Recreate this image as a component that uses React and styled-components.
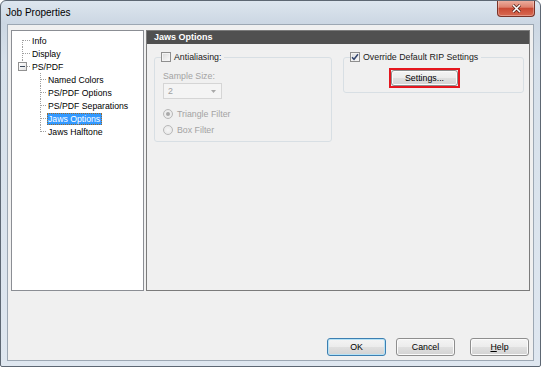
import React from "react";
import styled, { createGlobalStyle } from "styled-components";

const GlobalStyle = createGlobalStyle`
  html, body { margin: 0; padding: 0; background: #ffffff; }
  body { font-family: "Liberation Sans", Arial, sans-serif; }
  * { box-sizing: border-box; }
`;

const Window = styled.div`
  width: 541px;
  height: 367px;
  border: 1px solid #5d6773;
  border-radius: 6px 6px 2px 2px;
  background: linear-gradient(to bottom, #dde6ef 0px, #ccd7e3 22px, #d6e0ea 60px, #dfe7f0 100%);
  display: flex;
  flex-direction: column;
  overflow: hidden;
  font-family: "Liberation Sans", Arial, sans-serif;
`;

const TitleBar = styled.div`
  height: 23px;
  flex: none;
  display: flex;
  justify-content: space-between;
  align-items: flex-start;
  padding-left: 5px;
`;

const Title = styled.div`
  font-size: 10px;
  line-height: 23px;
  color: #000;
`;

const CloseButton = styled.div`
  width: 38px;
  height: 17px;
  margin-right: 5px;
  margin-top: -1px;
  border: 1px solid #7a3328;
  border-top: none;
  border-radius: 0 0 4px 4px;
  background: linear-gradient(to bottom, #eeb3a4 0%, #de816d 45%, #c94a34 52%, #d86a52 100%);
  box-shadow: inset 0 0 0 1px rgba(255, 255, 255, 0.3);
  display: flex;
  align-items: center;
  justify-content: center;
`;

const Client = styled.div`
  flex: 1;
  margin: 0 6px 5px 6px;
  border: 1px solid #9ca7b3;
  background: #f0f0f0;
  display: flex;
  flex-direction: column;
`;

const Body = styled.div`
  height: 261px;
  margin-top: 5px;
  padding: 0 3px;
  display: flex;
  gap: 2px;
`;

const Tree = styled.div`
  width: 133px;
  flex: none;
  border: 1px solid #8b8e94;
  background: #ffffff;
  padding-top: 3px;
`;

const TreeRow = styled.div`
  position: relative;
  height: 13px;
  display: flex;
  align-items: center;
  padding-left: ${(p) => (p.$level === 0 ? 19 : 35)}px;
  &::before {
    content: "";
    position: absolute;
    left: ${(p) => (p.$level === 0 ? 10 : 28)}px;
    top: ${(p) => (p.$first ? "6px" : "0")};
    bottom: ${(p) => (p.$last ? "6px" : "0")};
    border-left: 1px dotted #a0a0a0;
  }
  &::after {
    content: "";
    position: absolute;
    left: ${(p) => (p.$level === 0 ? 11 : 29)}px;
    width: ${(p) => (p.$level === 0 ? 7 : 5)}px;
    top: 6px;
    border-top: 1px dotted #a0a0a0;
  }
`;

const Expander = styled.span`
  position: absolute;
  left: 6px;
  top: 2px;
  width: 9px;
  height: 9px;
  border: 1px solid #919191;
  background: linear-gradient(135deg, #ffffff, #e2e2e2);
  z-index: 1;
  &::after {
    content: "";
    position: absolute;
    left: 1px;
    top: 3px;
    width: 5px;
    border-top: 1px solid #3d4a5c;
  }
`;

const TreeLabel = styled.span`
  font-size: 8.7px;
  line-height: 10px;
  height: 12px;
  padding: 0 1px 0 0;
  white-space: nowrap;
  border: 1px dotted ${(p) => (p.$selected ? "#9a6a2a" : "transparent")};
  background: ${(p) => (p.$selected ? "#3399ff" : "transparent")};
  color: ${(p) => (p.$selected ? "#ffffff" : "#000000")};
`;

const Panel = styled.div`
  flex: 1;
  border: 1px solid #7b7b7b;
  display: flex;
  flex-direction: column;
`;

const PanelHeader = styled.div`
  height: 13px;
  background: #505050;
  color: #ffffff;
  font-weight: bold;
  font-size: 9px;
  line-height: 13px;
  padding-left: 7px;
`;

const Groups = styled.div`
  display: flex;
  align-items: flex-start;
  gap: 11px;
  padding: 7px 5px 0 7px;
`;

const Group = styled.fieldset`
  width: ${(p) => p.$width}px;
  margin: 0;
  padding: 0 8px 4px 8px;
  border: 1px solid #d8dfe4;
  border-radius: 3px;
  min-inline-size: 0;
`;

const Legend = styled.legend`
  display: flex;
  align-items: center;
  gap: 3px;
  height: 12px;
  padding: 0 3px 0 0;
  margin-left: -2px;
  font-size: 8.8px;
  color: #1a1a1a;
`;

const Check = styled.span`
  width: 10px;
  height: 10px;
  flex: none;
  border: 1px solid #8f8f8f;
  background: linear-gradient(135deg, #d9d9d9, #fbfbfb);
  box-shadow: inset 0 0 0 1px #f3f3f3;
  display: flex;
  align-items: center;
  justify-content: center;
`;

const FieldLabel = styled.div`
  margin-top: 7px;
  font-size: 8.8px;
  line-height: 12px;
  color: #a3a3a3;
`;

const Select = styled.div`
  margin-top: 1px;
  width: 59px;
  height: 16px;
  border: 1px solid #d5d5d5;
  background: #f4f4f4;
  display: flex;
  align-items: center;
  justify-content: space-between;
  padding: 0 5px 0 4px;
  font-size: 8.8px;
  color: #a0a0a0;
`;

const RadioRow = styled.div`
  margin-top: ${(p) => p.$top}px;
  height: 14px;
  display: flex;
  align-items: center;
  gap: 4px;
  font-size: 8.8px;
  color: #a3a3a3;
`;

const Radio = styled.span`
  width: 10px;
  height: 10px;
  flex: none;
  border-radius: 50%;
  border: 1px solid #b8b8b8;
  background: radial-gradient(circle at 50% 50%, #f6f6f6, #e4e4e4);
  display: flex;
  align-items: center;
  justify-content: center;
  &::after {
    content: "";
    width: 4px;
    height: 4px;
    border-radius: 50%;
    background: ${(p) => (p.$checked ? "#a9a9a9" : "transparent")};
  }
`;

const Highlight = styled.div`
  width: fit-content;
  margin: 5px 0 0 37px;
  border: 2px solid #e5171f;
  display: flex;
`;

const PushButton = styled.button`
  width: ${(p) => p.$width || 59}px;
  height: ${(p) => p.$height || 18}px;
  margin: 0 0 0 ${(p) => p.$offset || 0}px;
  padding: 0;
  border: 1px solid ${(p) => (p.$default ? "#3c7fb1" : "#8e8e8e")};
  border-radius: 3px;
  background: linear-gradient(to bottom, #f4f4f4 0%, #ececec 48%, #dfdfdf 52%, #d3d3d3 100%);
  box-shadow: inset 0 0 0 1px ${(p) => (p.$default ? "#b6e2f6" : "#fbfbfb")};
  font-family: "Liberation Sans", Arial, sans-serif;
  font-size: 8.8px;
  color: #000;
  line-height: 1;
`;

const Footer = styled.div`
  margin-top: auto;
  display: flex;
  justify-content: flex-end;
  gap: 10px;
  padding: 0 4px 4px 0;
`;

const treeItems = [
  { label: "Info", level: 0, first: true },
  { label: "Display", level: 0 },
  { label: "PS/PDF", level: 0, last: true, expander: true },
  { label: "Named Colors", level: 1 },
  { label: "PS/PDF Options", level: 1 },
  { label: "PS/PDF Separations", level: 1 },
  { label: "Jaws Options", level: 1, selected: true },
  { label: "Jaws Halftone", level: 1, last: true },
];

function CheckMark() {
  return (
    <svg width="8" height="8" viewBox="0 0 8 8">
      <path d="M1 4.2 L3 6.3 L7 1.2" fill="none" stroke="#34466e" strokeWidth="1.5" />
    </svg>
  );
}

function JobProperties() {
  return (
    <Window>
      <TitleBar>
        <Title>Job Properties</Title>
        <CloseButton>
          <svg width="11" height="9" viewBox="0 0 11 9">
            <path d="M2 1 L9 8 M9 1 L2 8" stroke="#4a1c14" strokeWidth="3" />
            <path d="M2 1 L9 8 M9 1 L2 8" stroke="#ffffff" strokeWidth="1.6" />
          </svg>
        </CloseButton>
      </TitleBar>
      <Client>
        <Body>
          <Tree>
            {treeItems.map((item) => (
              <TreeRow key={item.label} $level={item.level} $first={item.first} $last={item.last}>
                {item.expander && <Expander />}
                <TreeLabel $selected={item.selected}>{item.label}</TreeLabel>
              </TreeRow>
            ))}
          </Tree>
          <Panel>
            <PanelHeader>Jaws Options</PanelHeader>
            <Groups>
              <Group $width={178}>
                <Legend>
                  <Check />
                  Antialiasing:
                </Legend>
                <FieldLabel>Sample Size:</FieldLabel>
                <Select>
                  <span>2</span>
                  <svg width="5" height="3" viewBox="0 0 5 3">
                    <path d="M0 0 L5 0 L2.5 3 Z" fill="#a8a8a8" />
                  </svg>
                </Select>
                <RadioRow $top={8}>
                  <Radio $checked />
                  Triangle Filter
                </RadioRow>
                <RadioRow $top={2}>
                  <Radio />
                  Box Filter
                </RadioRow>
              </Group>
              <Group $width={181}>
                <Legend>
                  <Check>
                    <CheckMark />
                  </Check>
                  Override Default RIP Settings
                </Legend>
                <Highlight>
                  <PushButton $width={67} $height={16}>
                    Settings...
                  </PushButton>
                </Highlight>
              </Group>
            </Groups>
          </Panel>
        </Body>
        <Footer>
          <PushButton $default>OK</PushButton>
          <PushButton>Cancel</PushButton>
          <PushButton $offset={5}>
            <u>H</u>elp
          </PushButton>
        </Footer>
      </Client>
    </Window>
  );
}

export default function App() {
  return (
    <>
      <GlobalStyle />
      <JobProperties />
    </>
  );
}
